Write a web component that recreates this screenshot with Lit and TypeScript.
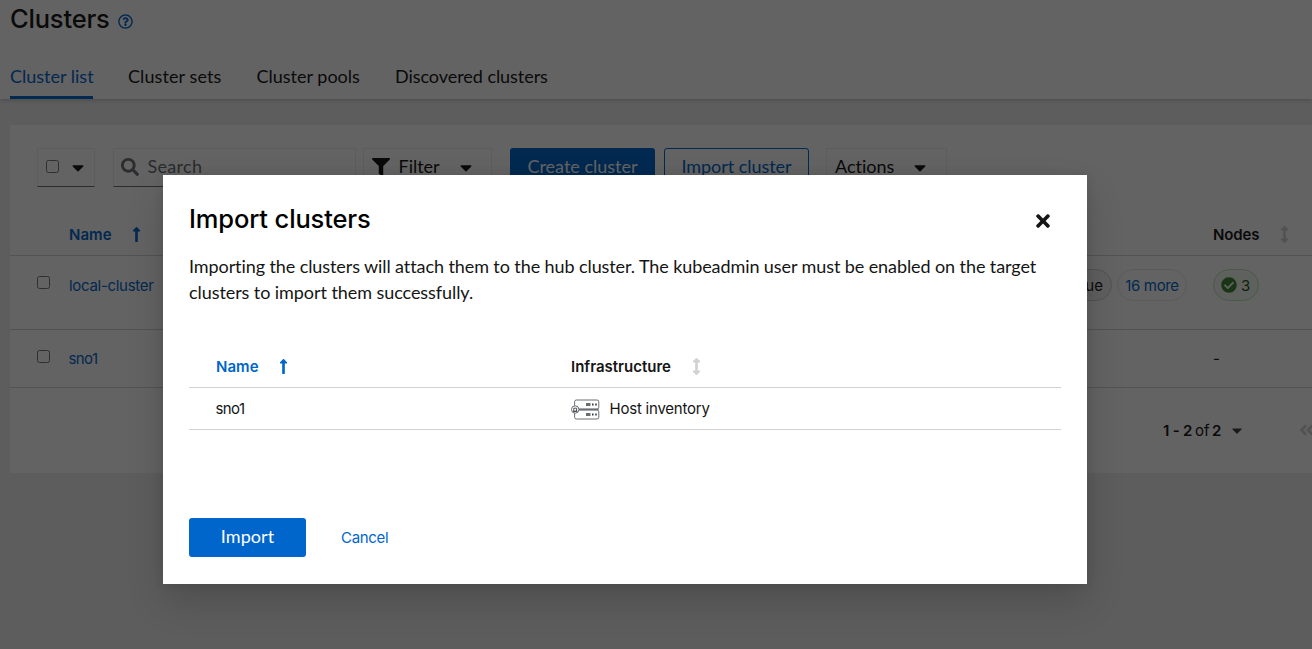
import { LitElement, html, css, svg } from "lit";
import { customElement } from "lit/decorators.js";

const glyphs = {
  question: ["0 0 512 512", "M256 8C119.043 8 8 119.083 8 256c0 136.997 111.043 248 248 248s248-111.003 248-248C504 119.083 392.957 8 256 8zm0 448c-110.532 0-200-89.431-200-200 0-110.495 89.472-200 200-200 110.491 0 200 89.471 200 200 0 110.53-89.431 200-200 200zm107.244-255.2c0 67.052-72.421 68.084-72.421 92.863V300c0 6.627-5.373 12-12 12h-45.647c-6.627 0-12-5.373-12-12v-8.659c0-35.745 27.1-50.034 47.579-61.516 17.561-9.845 28.324-16.541 28.324-29.579 0-17.246-21.999-28.693-39.784-28.693-23.189 0-33.894 10.977-48.942 29.969-4.057 5.12-11.46 6.071-16.666 2.124l-27.824-21.098c-5.107-3.872-6.251-11.066-2.644-16.363C184.846 131.491 214.94 112 261.794 112c49.071 0 101.45 38.304 101.45 88.8zM298 368c0 23.159-18.841 42-42 42s-42-18.841-42-42 18.841-42 42-42 42 18.841 42 42z"],
  caret: ["0 0 320 512", "M31.3 192h257.3c17.8 0 26.7 21.5 14.1 34.1L174.1 354.8c-7.8 7.8-20.5 7.8-28.3 0L17.2 226.1C4.6 213.5 13.5 192 31.3 192z"],
  search: ["0 0 512 512", "M505 442.7L405.3 343c-4.5-4.5-10.6-7-17-7H372c27.6-35.3 44-79.7 44-128C416 93.1 322.9 0 208 0S0 93.1 0 208s93.1 208 208 208c48.3 0 92.7-16.4 128-44v16.3c0 6.4 2.5 12.5 7 17l99.7 99.7c9.4 9.4 24.6 9.4 33.9 0l28.3-28.3c9.4-9.4 9.4-24.6.1-34zM208 336c-70.7 0-128-57.2-128-128 0-70.7 57.2-128 128-128 70.7 0 128 57.2 128 128 0 70.7-57.2 128-128 128z"],
  filter: ["0 0 512 512", "M487.976 0H24.028C2.71 0-8.047 25.866 7.058 40.971L192 225.941V432c0 7.831 3.821 15.17 10.237 19.662l80 55.98C298.02 518.69 320 507.493 320 487.98V225.941l184.947-184.97C520.021 25.896 509.338 0 487.976 0z"],
  up: ["0 0 256 512", "M88 166.059V468c0 6.627 5.373 12 12 12h56c6.627 0 12-5.373 12-12V166.059h46.059c21.382 0 32.09-25.851 16.971-40.971l-86.059-86.059c-9.373-9.373-24.569-9.373-33.941 0l-86.059 86.059c-15.119 15.119-4.411 40.971 16.971 40.971H88z"],
  updown: ["0 0 256 512", "M214.059 377.941H168V134.059h46.059c21.382 0 32.09-25.851 16.971-40.971L144.971 7.029c-9.373-9.373-24.568-9.373-33.941 0L24.971 93.088c-15.119 15.119-4.411 40.971 16.971 40.971H88v243.882H41.941c-21.382 0-32.09 25.851-16.971 40.971l86.059 86.059c9.373 9.373 24.568 9.373 33.941 0l86.059-86.059c15.12-15.119 4.412-40.971-16.97-40.971z"],
  check: ["0 0 512 512", "M504 256c0 136.967-111.033 248-248 248S8 392.967 8 256 119.033 8 256 8s248 111.033 248 248zM227.314 387.314l184-184c6.248-6.248 6.248-16.379 0-22.627l-22.627-22.627c-6.248-6.249-16.379-6.249-22.628 0L216 308.118l-70.059-70.059c-6.248-6.248-16.379-6.248-22.628 0l-22.627 22.627c-6.248 6.248-6.248 16.379 0 22.627l104 104c6.249 6.249 16.379 6.249 22.628.001z"],
  times: ["0 0 352 512", "M242.72 256l100.07-100.07c12.28-12.28 12.28-32.19 0-44.48l-22.24-22.24c-12.28-12.28-32.19-12.28-44.48 0L176 189.28 75.93 89.21c-12.28-12.28-32.19-12.28-44.48 0L9.21 111.45c-12.28 12.28-12.28 32.19 0 44.48L109.28 256 9.21 356.07c-12.28 12.28-12.28 32.19 0 44.48l22.24 22.24c12.28 12.28 32.2 12.28 44.48 0L176 322.72l100.07 100.07c12.28 12.28 32.2 12.28 44.48 0l22.24-22.24c12.28-12.28 12.28-32.19 0-44.48L242.72 256z"],
  first: ["0 0 448 512", "M223.7 239l136-136c9.4-9.4 24.6-9.4 33.9 0l22.6 22.6c9.4 9.4 9.4 24.6 0 33.9L319.9 256l96.4 96.4c9.4 9.4 9.4 24.6 0 33.9L393.7 409c-9.4 9.4-24.6 9.4-33.9 0l-136-136c-9.5-9.4-9.5-24.6-.1-34zm-192 34l136 136c9.4 9.4 24.6 9.4 33.9 0l22.6-22.6c9.4-9.4 9.4-24.6 0-33.9L127.9 256l96.4-96.4c9.4-9.4 9.4-24.6 0-33.9L201.7 103c-9.4-9.4-24.6-9.4-33.9 0l-136 136c-9.5 9.4-9.5 24.6-.1 34z"],
};

const icon = (name: keyof typeof glyphs, cls: string) =>
  html`<svg class="ico ${cls}" viewBox=${glyphs[name][0]} aria-hidden="true">${svg`<path fill="currentColor" d=${glyphs[name][1]}></path>`}</svg>`;

const shared = css`
  * { box-sizing: border-box; }
  .ico { display: block; flex: none; }
  .t { display: block; flex: none; white-space: nowrap; }
  .sm { font: 400 15px/20px Inter, "Liberation Sans", sans-serif; }
  .hd { font: 600 15px/20px Inter, "Liberation Sans", sans-serif; }
  .h1 { font: 500 25.5px/35px Inter, "Liberation Sans", sans-serif; margin: 0; }
  .up { width: 9px; height: 17px; color: #06c; }
  .ud { width: 9px; height: 17px; margin-top: -1px; color: #d2d2d2; }
  .blue { color: #06c; }
  .name { letter-spacing: 0.05px; }
  .sno { letter-spacing: -0.6px; margin-left: -0.5px; }
`;

@customElement("clusters-page")
class ClustersPage extends LitElement {
  static styles = [shared, css`
    :host { display: block; width: 1312px; height: 649px; overflow: hidden; background: #f0f0f0; }
    header { position: relative; height: 99px; background: #fff; padding-left: 10px; box-shadow: 0 2px 4px rgba(3,3,3,.16); }
    .title { display: flex; align-items: flex-start; height: 40px; padding-top: 1px; }
    .title .h1 { letter-spacing: -0.2px; width: 108px; }
    .q { width: 15px; height: 15px; margin-top: 13px; color: #06c; }
    nav { display: flex; gap: 35px; margin-top: 16px; }
    .tab { height: 43px; line-height: 41px; border-bottom: 3px solid transparent; }
    .tab.on { color: #06c; border-color: #06c; }
    .t1 { width: 83px; } .t2 { width: 93.5px; letter-spacing: 0.1px; }
    .t3 { width: 103.5px; } .t4 { letter-spacing: -0.05px; }
    .card { width: 1302px; height: 348px; margin: 26px 0 0 10px; background: #fff; padding-top: 23px; }
    .bar { display: flex; padding-left: 27px; height: 66px; align-items: flex-start; }
    .ctl { display: flex; align-items: center; height: 39px; border: 1px solid #f0f0f0; line-height: 35px; padding-bottom: 2px; flex: none; }
    .under { border-bottom-color: #6a6e73; }
    .box { display: block; flex: none; width: 13px; height: 13px; border: 1px solid #767676; border-radius: 2.5px; background: #fff; }
    .pick { width: 58px; padding-left: 8px; }
    .caret { width: 12px; height: 19px; }
    .pick .caret { margin: 1px 0 0 12.5px; }
    .find { width: 243px; margin-left: 18px; padding-left: 7px; color: #6a6e73; }
    .si { width: 18px; height: 18px; margin-right: 8.5px; color: #6a6e73; }
    .s1 { letter-spacing: 0.3px; }
    .filt { width: 129px; margin-left: 7px; padding-left: 8px; }
    .fi { width: 18px; height: 18px; margin-right: 8.5px; }
    .s2 { width: 61px; }
    .filt .caret, .act .caret { margin-top: 1px; }
    .btn { width: 145px; height: 39px; line-height: 37px; border-radius: 3px; text-align: center; flex: none; }
    .make { margin-left: 18px; background: #06c; color: #fff; }
    .imp { margin-left: 9px; color: #06c; border: 1px solid #06c; line-height: 35px; letter-spacing: -0.04px; }
    .act { width: 121px; margin-left: 17px; padding-left: 8px; }
    .s3 { width: 79px; }
    .row { display: grid; grid-template-columns: 59px 1fr 99px; border-bottom: 1px solid #d2d2d2; }
    .row.head { height: 42px; align-items: center; }
    .head > div { display: flex; align-items: center; }
    .head .name { width: 63px; }
    .nodes { width: 67px; letter-spacing: -0.1px; }
    .r1 { height: 74px; padding-top: 13px; }
    .r2 { height: 58px; padding-top: 13px; }
    .row .box { margin: 7px 0 0 27px; }
    .cell { display: flex; justify-content: space-between; padding-right: 26px; line-height: 32px; }
    .cell .sm, .pill { line-height: 33px; }
    .r2 .cell .sm, .r2 .dash { line-height: 32px; }
    .local { letter-spacing: -0.3px; }
    .pills { display: flex; gap: 5px; }
    .pills .pill, .ok { display: flex; align-items: center; height: 32px; border-radius: 16px; border: 1px solid #e8e8e8; }
    .pills .pill.gray { background: #f5f5f5; border-color: #d2d2d2; padding: 0 8px; }
    .pill.more { width: 70px; justify-content: center; letter-spacing: -0.35px; }
    .ok { width: 46px; padding-left: 7px; gap: 4px; background: #f3faf2; border-color: #bde5b8; color: #1e4f18; }
    .ck { width: 16px; height: 16px; color: #3e8635; }
    .ok .sm { padding-top: 1px; }
    .pages { display: flex; align-items: center; height: 85px; padding-left: 1153px; }
    .range { width: 28px; margin-right: 4px; letter-spacing: -0.2px; }
    .of { width: 17px; }
    .two { width: 20px; }
    .pc { width: 10px; height: 17px; color: #3c3f42; }
    .pf { width: 15px; height: 18px; margin: -2px 0 0 57px; color: #d2d2d2; }
  `];
  render() {
    return html`
      <header>
        <div class="title"><h1 class="t h1">Clusters</h1>${icon("question", "q")}</div>
        <nav>
          <span class="t tab on t1">Cluster list</span><span class="t tab t2">Cluster sets</span>
          <span class="t tab t3">Cluster pools</span><span class="t tab t4">Discovered clusters</span>
        </nav>
      </header>
      <section class="card">
        <div class="bar">
          <div class="ctl under pick"><span class="box"></span>${icon("caret", "caret")}</div>
          <div class="ctl under find">${icon("search", "si")}<span class="t s1">Search</span></div>
          <div class="ctl filt">${icon("filter", "fi")}<span class="t s2">Filter</span>${icon("caret", "caret")}</div>
          <div class="btn make">Create cluster</div>
          <div class="btn imp">Import cluster</div>
          <div class="ctl act"><span class="t s3">Actions</span>${icon("caret", "caret")}</div>
        </div>
        <div class="row head">
          <span></span>
          <div><span class="t hd blue name">Name</span>${icon("up", "up")}</div>
          <div><span class="t hd nodes">Nodes</span>${icon("updown", "ud")}</div>
        </div>
        <div class="row r1">
          <span class="box"></span>
          <div class="cell">
            <span class="t sm blue local">local-cluster</span>
            <div class="pills"><span class="sm pill gray">local-cluster=true</span><span class="sm pill more blue">16 more</span></div>
          </div>
          <div class="ok">${icon("check", "ck")}<span class="sm">3</span></div>
        </div>
        <div class="row r2">
          <span class="box"></span>
          <div class="cell"><span class="t sm blue sno">sno1</span></div>
          <span class="t sm dash">-</span>
        </div>
        <div class="pages">
          <span class="t hd range">1 - 2</span><span class="t sm of">of</span><span class="t hd two">2</span>
          ${icon("caret", "pc")}${icon("first", "pf")}
        </div>
      </section>`;
  }
}

@customElement("import-dialog")
class ImportDialog extends LitElement {
  static styles = [shared, css`
    :host { display: block; box-sizing: border-box; width: 924px; height: 409px; padding: 26px; background: #fff;
      box-shadow: 0 18px 35px rgba(3,3,3,.16), 0 0 9px rgba(3,3,3,.1); }
    .top { display: flex; justify-content: space-between; padding-right: 11px; height: 37px; }
    .top .h1 { letter-spacing: -0.14px; color: #000; }
    .x { width: 14px; height: 20px; margin-top: 10px; }
    p { margin: 15px 0 0; line-height: 26px; }
    .l1 { letter-spacing: -0.09px; } .l2 { letter-spacing: -0.07px; }
    .row { display: grid; grid-template-columns: 355px 1fr; align-items: center; height: 42px; padding-left: 27px; border-bottom: 1px solid #d2d2d2; }
    .row > div { display: flex; align-items: center; }
    .head { margin-top: 41px; }
    .head .name { width: 63px; }
    .infra { width: 121px; letter-spacing: 0; }
    .host { width: 29px; height: 21px; margin: 2px 9.5px 0 0; }
    .hi { letter-spacing: -0.22px; }
    .foot { display: flex; align-items: center; margin-top: 88px; }
    .go { width: 117px; height: 39px; line-height: 37px; border-radius: 3px; background: #06c; color: #fff; text-align: center; letter-spacing: 0.05px; }
    .cancel { margin: 1px 0 0 35px; letter-spacing: -0.3px; }
  `];
  render() {
    return html`
      <div class="top"><h2 class="t h1">Import clusters</h2>${icon("times", "x")}</div>
      <p><span class="t l1">Importing the clusters will attach them to the hub cluster. The kubeadmin user must be enabled on the target</span>
        <span class="t l2">clusters to import them successfully.</span></p>
      <div class="row head">
        <div><span class="t hd blue name">Name</span>${icon("up", "up")}</div>
        <div><span class="t hd infra">Infrastructure</span>${icon("updown", "ud")}</div>
      </div>
      <div class="row">
        <span class="t sm sno">sno1</span>
        <div>
          <svg class="ico host" viewBox="0 0 29 21" fill="none" stroke="#6a6e73">
            <rect x="3.6" y="1" width="24.2" height="9" rx="1.8"></rect>
            <rect x="3.6" y="11" width="24.2" height="9" rx="1.8"></rect>
            <path d="M7 10.5h20.6" stroke-width="1.4"></path>
            <path d="M15 5.5h4.5M15 15.5h4.5" stroke-width="3"></path>
            <path d="M21 5.5h1.6M24.2 5.5h1.6M21 15.5h1.6M24.2 15.5h1.6" stroke="#3c3f42" stroke-width="1.8"></path>
            <circle cx="4.2" cy="10.5" r="3.7" fill="#fff"></circle>
            <path d="M2.8 12.2V9.2h2.8v3zM2 12.4h4.4" stroke="#3c3f42" stroke-width=".9"></path>
          </svg>
          <span class="t sm hi">Host inventory</span>
        </div>
      </div>
      <div class="foot"><div class="go">Import</div><span class="t sm blue cancel">Cancel</span></div>`;
  }
}

@customElement("app-root")
class AppRoot extends LitElement {
  static styles = css`
    :host { display: block; position: relative; width: 1312px; height: 649px; overflow: hidden; color: #151515;
      font: 400 18px/26px Lato, "Liberation Sans", sans-serif; font-variant-ligatures: none; }
    .veil { position: absolute; inset: 0; background: rgba(3,3,3,.62); }
    import-dialog { position: absolute; left: 163px; top: 175px; }
  `;
  render() {
    return html`<clusters-page></clusters-page><div class="veil"></div><import-dialog></import-dialog>`;
  }
}
